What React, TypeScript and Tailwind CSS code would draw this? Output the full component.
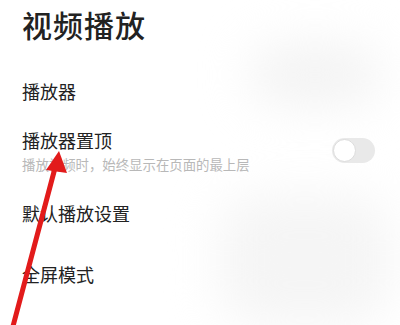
import React from 'react';

const font = { fontFamily: '"Noto Sans CJK SC", "Noto Sans", sans-serif' };

const Toggle = () => (
  <div className="w-[43px] h-[25px] rounded-full bg-[#e9e9e9] p-[1px] flex items-center">
    <div className="w-[23px] h-[23px] rounded-full bg-white border border-[#dcdcdc]" />
  </div>
);

const Arrow = () => (
  <svg className="absolute inset-0 pointer-events-none" width="400" height="325" viewBox="0 0 400 325">
    <line x1="12" y1="330" x2="55" y2="168" stroke="#e21b1b" strokeWidth="5" strokeLinecap="round" />
    <polygon points="59,151 46,170 67,173" fill="#e21b1b" />
  </svg>
);

export default function App() {
  return (
    <div className="relative w-[400px] h-[325px] overflow-hidden bg-white text-[#222]" style={font}>
      {/* blurred patches from the source image */}
      <div className="absolute left-[250px] top-[45px] w-[130px] h-[60px] rounded-full bg-[#f3f3f3] blur-xl" />
      <div className="absolute left-[220px] top-[195px] w-[170px] h-[130px] rounded-[40px] bg-[#f5f5f5] blur-xl" />

      <div className="relative pl-[22px] pr-[25px]">
        <h1 className="mt-[9px] text-[30px] leading-[30px] font-medium tracking-[1px]">视频播放</h1>

        <div className="mt-[40px] text-[18px] leading-[24px]">播放器</div>

        <div className="mt-[25px] flex items-center justify-between">
          <div>
            <div className="text-[18px] leading-[24px]">播放器置顶</div>
            <div className="mt-[3px] text-[13.4px] leading-[18px] text-[#b8b8b8]">播放视频时，始终显示在页面的最上层</div>
          </div>
          <Toggle />
        </div>

        <div className="mt-[28px] text-[18px] leading-[24px]">默认播放设置</div>

        <div className="mt-[37px] text-[18px] leading-[24px]">全屏模式</div>
      </div>

      <Arrow />
    </div>
  );
}
